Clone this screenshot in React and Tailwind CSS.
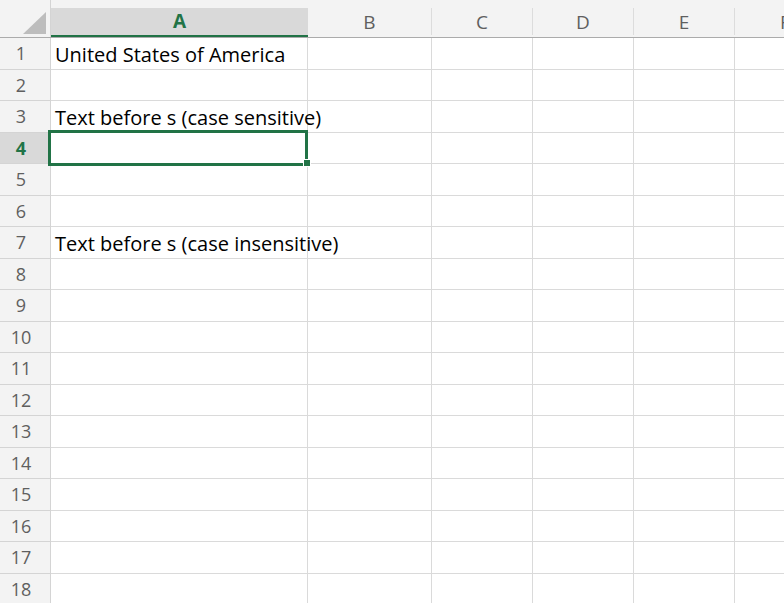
import React from 'react';

const columns = [
  { name: 'A', w: 'w-[257px]', selected: true },
  { name: 'B', w: 'w-[124px]' },
  { name: 'C', w: 'w-[101px]' },
  { name: 'D', w: 'w-[101px]' },
  { name: 'E', w: 'w-[101px]' },
  { name: 'F', w: 'w-[101px]' },
];

const cellText = {
  1: 'United States of America',
  3: 'Text before s (case sensitive)',
  7: 'Text before s (case insensitive)',
};

const rows = Array.from({ length: 18 }, (_, i) => i + 1);

export default function App() {
  return (
    <div className="relative h-[603px] w-[784px] overflow-hidden bg-white font-['Open_Sans','Noto_Sans',sans-serif] text-black">
      {/* column headers */}
      <div className="flex h-[38px] border-b border-[#ababab] bg-[#f3f3f3]">
        <div className="relative w-[51px] shrink-0 border-r border-[#d4d4d4]">
          <svg className="absolute left-[23px] top-[12px]" width="23" height="22" viewBox="0 0 23 22">
            <polygon points="23,0 23,22 0,22" fill="#bdbdbd" />
          </svg>
        </div>
        {columns.map((c) => (
          <div key={c.name} className={`${c.w} shrink-0 pt-[8px]`}>
            {c.selected ? (
              <div className="flex h-full items-center justify-center border-b-2 border-[#217346] bg-[#d9d9d9] pb-[1px] text-[19px] font-bold text-[#217346]">
                {c.name}
              </div>
            ) : (
              <div className="flex h-[27px] items-center justify-center border-r border-[#dcdcdc] pt-[1px] text-[19px] text-[#5f5f5f]">
                {c.name}
              </div>
            )}
          </div>
        ))}
      </div>

      {/* rows */}
      {rows.map((r) => (
        <div key={r} className={`flex ${r % 2 === 1 ? 'h-[32px]' : 'h-[31px]'}`}>
          <div
            className={`flex w-[51px] shrink-0 items-center justify-center border-b border-r border-[#d4d4d4] pr-[8px] text-[18px] ${
              r === 4 ? 'bg-[#d9d9d9] font-bold text-[#217346]' : 'bg-[#f3f3f3] text-[#5f5f5f]'
            }`}
          >
            {r}
          </div>
          {columns.map((c) => (
            <div
              key={c.name}
              className={`${c.w} shrink-0 border-b border-r border-[#dadada] ${c.name === 'A' ? 'relative' : ''}`}
            >
              {c.name === 'A' && cellText[r] && (
                <div className="absolute left-[4px] top-[3px] whitespace-nowrap text-[20px] leading-[28px]">{cellText[r]}</div>
              )}
            </div>
          ))}
        </div>
      ))}

      {/* active cell A4 */}
      <div className="absolute left-[48px] top-[130px] h-[36px] w-[260px] border-[3px] border-[#217346]" />
      <div className="absolute left-[303px] top-[159px] h-[8px] w-[8px] border border-white bg-[#217346]" />
    </div>
  );
}
